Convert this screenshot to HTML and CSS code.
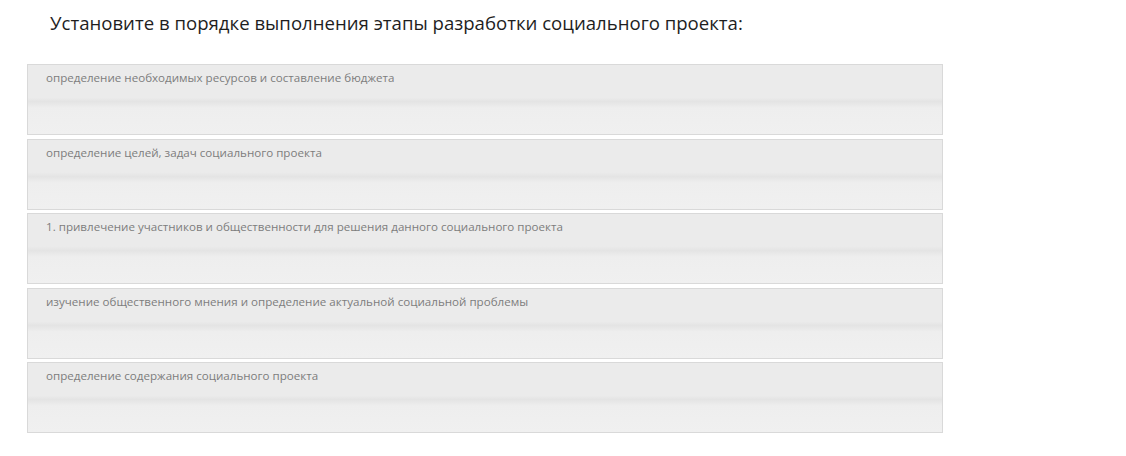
FILE: index.html
```html
<!DOCTYPE html>
<html lang="ru">
<head>
    <meta charset="UTF-8">
    <title>Порядок этапов</title>
    <link rel="stylesheet" href="styles.css">
</head>
<body>
    <h1 class="question">Установите в порядке выполнения этапы разработки социального проекта:</h1>

    <ul class="answers">
        <li class="answer">определение необходимых ресурсов и составление бюджета</li>
        <li class="answer">определение целей, задач социального проекта</li>
        <li class="answer">1. привлечение участников и общественности для решения данного социального проекта</li>
        <li class="answer">изучение общественного мнения и определение актуальной социальной проблемы</li>
        <li class="answer">определение содержания социального проекта</li>
    </ul>
</body>
</html>
```

FILE: styles.css
```css
body {
    margin: 0;
    padding: 0 0 0 27px;
    font-family: 'Open Sans', 'DejaVu Sans', sans-serif;
    background-color: #fff;
    color: #222;
}
.question {
    margin: 0;
    padding: 10px 0 0 23px;
    height: 55px;
    box-sizing: border-box;
    font-size: 18.6px;
    font-weight: normal;
    color: #1e1e1e;
}
.answers {
    list-style: none;
    margin: 9px 0 0 0;
    padding: 0;
    width: 916px;
    display: flex;
    flex-direction: column;
    gap: 3.6px;
}
.answer {
    box-sizing: border-box;
    height: 71px;
    padding: 5px 18px;
    border: 1px solid #d9d9d9;
    font-size: 11.6px;
    color: #7d7d7d;
    background: linear-gradient(to bottom,
        #ebebeb 0,
        #ebebeb 47%,
        #e4e4e4 53%,
        #eeeeee 62%,
        #f0f0f0 100%);
}
```
